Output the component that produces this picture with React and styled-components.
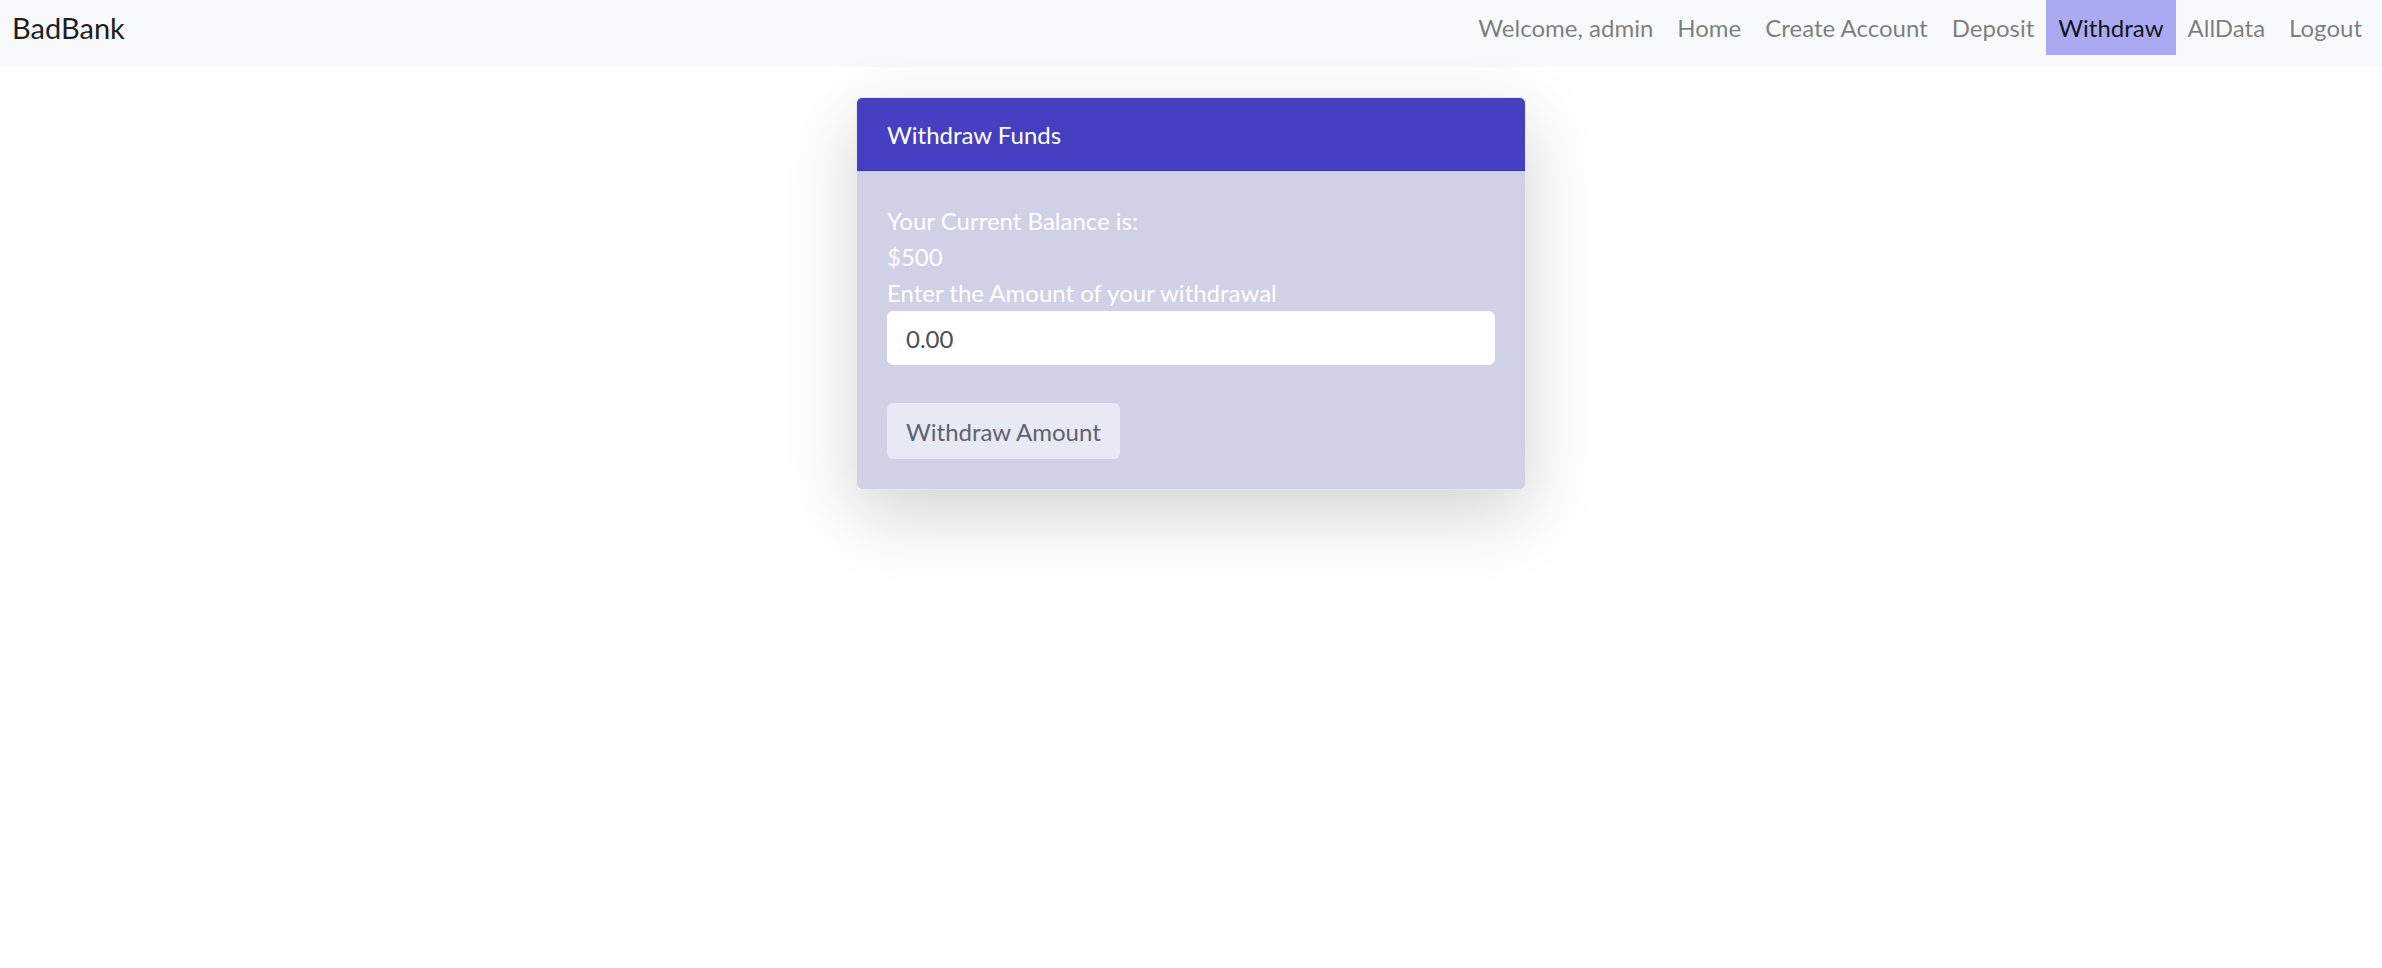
import React from "react";
import styled, { createGlobalStyle } from "styled-components";

const GlobalStyle = createGlobalStyle`
  body {
    margin: 0;
    background: #fff;
    font-family: "Lato", "Open Sans", sans-serif;
    font-size: 24px;
    line-height: 36px;
    color: #212529;
  }
  #root { min-height: 100vh; }
  * { box-sizing: border-box; }
`;

const links = ["Welcome, admin", "Home", "Create Account", "Deposit", "Withdraw", "AllData", "Logout"];

const App = () => {
  return (
    <>
      <GlobalStyle />
      <NavBar>
        <Brand href="#">BadBank</Brand>
        <NavList>
          {links.map((l) => (
            <NavLink key={l} href="#" $active={l === "Withdraw"}>
              {l}
            </NavLink>
          ))}
        </NavList>
      </NavBar>
      <Main>
        <Card>
          <CardHeader>Withdraw Funds</CardHeader>
          <CardBody>
            <Line>Your Current Balance is:</Line>
            <Line>$500</Line>
            <Line>Enter the Amount of your withdrawal</Line>
            <AmountInput type="text" defaultValue="0.00" />
            <Spacer />
            <SubmitButton disabled>Withdraw Amount</SubmitButton>
          </CardBody>
        </Card>
      </Main>
    </>
  );
};

const NavBar = styled.nav`
  display: flex;
  align-items: flex-start;
  justify-content: space-between;
  height: 67px;
  padding: 0 8px 0 12px;
  background-color: #f8f9fa;
`;

const Brand = styled.a`
  height: 55px;
  display: flex;
  align-items: center;
  font-size: 29px;
  color: rgba(0, 0, 0, 0.9);
  text-decoration: none;
`;

const NavList = styled.div`
  display: flex;
  align-items: flex-start;
`;

const NavLink = styled.a`
  height: 55px;
  display: flex;
  align-items: center;
  padding: 1px 12px 0;
  text-decoration: none;
  color: ${(p) => (p.$active ? "rgba(0, 0, 0, 0.9)" : "rgba(0, 0, 0, 0.5)")};
  background-color: ${(p) => (p.$active ? "#aaaaf2" : "transparent")};
`;

const Main = styled.main`
  display: flex;
  justify-content: center;
  padding: 30px 0 120px;
`;

const Card = styled.div`
  width: 670px;
  border: 1.5px solid rgba(0, 0, 0, 0.08);
  border-radius: 6px;
  overflow: hidden;
  box-shadow: 0 24px 72px rgba(0, 0, 0, 0.175);
`;

const CardHeader = styled.div`
  padding: 19px 30px 17px;
  background-color: #4540c1;
  color: #fff;
  border-bottom: 1.5px solid rgba(0, 0, 0, 0.125);
`;

const CardBody = styled.div`
  padding: 32px 30px 30px;
  background-color: #d0d0e6;
  color: #fff;
`;

const Line = styled.div`
  line-height: 36px;
`;

const AmountInput = styled.input`
  display: block;
  width: 100%;
  height: 54px;
  padding: 0 18px;
  border: 1px solid #fff;
  border-radius: 6px;
  background: #fff;
  font-family: inherit;
  font-size: 24px;
  color: #495057;
  outline: none;
`;

const Spacer = styled.div`
  height: 38px;
`;

const SubmitButton = styled.button`
  height: 56px;
  padding: 0 18px;
  border: 1px solid transparent;
  border-radius: 6px;
  background-color: #e7e9f4;
  color: #5f6270;
  font-family: inherit;
  font-size: 24px;
  cursor: default;
`;

export default App;
